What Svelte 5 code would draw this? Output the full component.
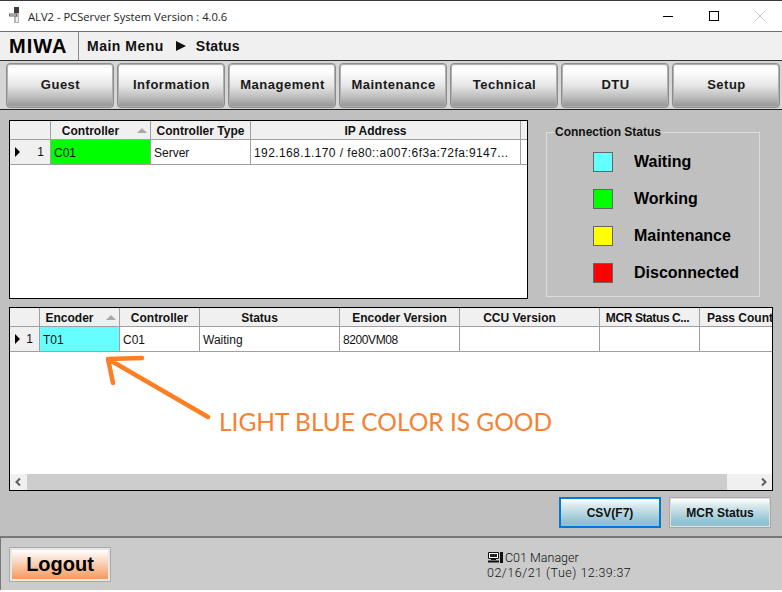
<script>
  const tabs = ["Guest", "Information", "Management", "Maintenance", "Technical", "DTU", "Setup"];
  const legend = [
    { label: "Waiting", color: "#66ffff" },
    { label: "Working", color: "#00ff00" },
    { label: "Maintenance", color: "#ffff00" },
    { label: "Disconnected", color: "#ff0000" }
  ];
</script>

<div class="window">
  <div class="titlebar">
    <svg class="app-icon" width="16" height="20" viewBox="0 0 16 20">
      <rect x="6" y="1" width="5" height="16" fill="#b4b4b4" />
      <rect x="6" y="1" width="5" height="6" fill="#3c3c3c" />
      <rect x="8" y="11" width="2" height="5" fill="#eee" />
      <rect x="1" y="7.500" width="8" height="3" fill="#6a6a6a" />
      <rect x="2" y="8.500" width="6" height="1" fill="#ddd" />
    </svg>
    <span class="title">ALV2 - PCServer System Version : 4.0.6</span>
    <div class="controls">
      <svg width="46" height="30" viewBox="0 0 46 30"><rect x="18" y="15" width="10" height="1" fill="#000" /></svg>
      <svg width="46" height="30" viewBox="0 0 46 30"><rect x="18.5" y="10.5" width="9" height="9" fill="none" stroke="#000" /></svg>
      <svg width="46" height="30" viewBox="0 0 46 30"><path d="M18 10l10 10M28 10l-10 10" stroke="#c4c4c4" fill="none" /></svg>
    </div>
  </div>

  <div class="header">
    <div class="brand">MIWA</div>
    <div class="crumbs">
      <span>Main Menu</span>
      <svg width="12" height="10" viewBox="0 0 12 10"><path d="M1 0l10 5-10 5z" fill="#111" /></svg>
      <span class="leaf">Status</span>
    </div>
  </div>

  <nav class="tabs">
    {#each tabs as tab}
      <button class="tab">{tab}</button>
    {/each}
  </nav>

  <main class="body">
    <div class="top">
      <div class="table controllers">
        <div class="row head">
          <div class="cell"></div>
          <div class="cell sorted">Controller<i class="sort"></i></div>
          <div class="cell">Controller Type</div>
          <div class="cell wide">IP Address</div>
          <div class="cell end"></div>
        </div>
        <div class="row data">
          <div class="cell rowhead"><i class="marker"></i><span>1</span></div>
          <div class="cell green">C01</div>
          <div class="cell">Server</div>
          <div class="cell ip">192.168.1.170 / fe80::a007:6f3a:72fa:9147...</div>
          <div class="cell end"></div>
        </div>
      </div>

      <section class="status">
        <span class="status-title">Connection Status</span>
        {#each legend as item}
          <div class="status-item">
            <i class="swatch" style="background: {item.color}"></i>
            <span>{item.label}</span>
          </div>
        {/each}
      </section>
    </div>

    <div class="table encoders">
      <div class="row head">
        <div class="cell"></div>
        <div class="cell sorted">Encoder<i class="sort"></i></div>
        <div class="cell">Controller</div>
        <div class="cell wide">Status</div>
        <div class="cell">Encoder Version</div>
        <div class="cell wide">CCU Version</div>
        <div class="cell tight">MCR Status C...</div>
        <div class="cell clip">Pass Count</div>
      </div>
      <div class="row data">
        <div class="cell rowhead"><i class="marker"></i><span>1</span></div>
        <div class="cell cyan">T01</div>
        <div class="cell">C01</div>
        <div class="cell">Waiting</div>
        <div class="cell ver">8200VM08</div>
        <div class="cell"></div>
        <div class="cell"></div>
        <div class="cell"></div>
      </div>
      <div class="scrollbar">
        <svg width="17" height="16" viewBox="0 0 17 16"><path d="M10 4.500L6.500 8l3.500 3.500" fill="none" stroke="#606060" stroke-width="2" /></svg>
        <div class="thumb"></div>
        <svg class="right" width="16" height="16" viewBox="0 0 16 16"><path d="M6 4.500L9.500 8 6 11.500" fill="none" stroke="#606060" stroke-width="2" /></svg>
      </div>
    </div>

    <div class="actions">
      <button class="action focused">CSV(F7)</button>
      <button class="action">MCR Status</button>
    </div>

    <!-- annotation drawn over the window -->
    <svg class="arrow" width="120" height="76" viewBox="0 0 120 76">
      <path d="M4 8L104 66M4 8L38 7M4 8L9 32" fill="none" stroke="#fd7f24" stroke-width="4.500" stroke-linecap="round" />
    </svg>
    <div class="note">LIGHT BLUE COLOR IS GOOD</div>
  </main>

  <footer class="footer">
    <button class="logout">Logout</button>
    <div class="session">
      <div class="user">
        <svg width="15" height="11" viewBox="0 0 15 11">
          <path d="M0.500 0.500H10.500V6.500H0.500z" fill="#fff" stroke="#111" />
          <rect x="2" y="2" width="7" height="3" fill="#222" />
          <rect x="3" y="7" width="5" height="1" fill="#111" />
          <rect x="0" y="8.500" width="11" height="2" fill="#111" />
          <rect x="12" y="0" width="3" height="11" fill="#111" />
        </svg>
        <span>C01 Manager</span>
      </div>
      <div class="date">02/16/21 (Tue) 12:39:37</div>
    </div>
  </footer>
</div>

<style>
  :global(body) {
    background: #fff;
  }
  .window {
    width: 782px;
    height: 592px;
    overflow: hidden;
    display: flex;
    flex-direction: column;
    font-family: "Liberation Sans", Arial, sans-serif;
    color: #000;
    box-sizing: border-box;
    border-top: 1px solid #3a3a3a;
    border-bottom: 2px solid #fff;
  }
  .titlebar {
    height: 30px;
    display: flex;
    align-items: center;
    background: #fff;
    border-bottom: 1px solid #707070;
    flex: none;
  }
  .app-icon {
    margin-left: 8px;
  }
  .title {
    margin-left: 4px;
    font-family: "Open Sans", sans-serif;
    font-size: 11.2px;
    color: #222;
  }
  .controls {
    margin-left: auto;
    display: flex;
    margin-right: -1px;
  }
  .header {
    height: 28px;
    flex: none;
    display: flex;
    align-items: center;
    background: #f0f0f0;
    border-bottom: 1px solid #333;
  }
  .brand {
    width: 79px;
    height: 100%;
    border-right: 1px solid #8a8a8a;
    box-sizing: border-box;
    font-size: 20px;
    font-weight: bold;
    letter-spacing: 1px;
    line-height: 28px;
    padding-left: 9px;
  }
  .crumbs {
    display: flex;
    align-items: center;
    gap: 11px;
    padding-left: 8px;
    font-size: 14px;
    font-weight: bold;
    letter-spacing: 0.5px;
    color: #111;
  }
  .leaf {
    margin-left: -2px;
    letter-spacing: 0.2px;
  }
  .tabs {
    flex: none;
    height: 49px;
    box-sizing: border-box;
    padding: 2px 0 0 6px;
    display: flex;
    gap: 3px;
    background: #d6d6d6;
    border-bottom: 1px solid #222;
  }
  .tab {
    width: 108px;
    height: 45px;
    padding: 0 0 2px 1px;
    border: 1px solid #8c8c8c;
    border-radius: 4px;
    box-shadow: inset 0 0 0 1px #b0b0b0;
    background: linear-gradient(#f4f4f4 0%, #ffffff 15%, #e6e6e6 50%, #bcbcbc 78%, #929292 100%);
    font-family: "Liberation Sans", Arial, sans-serif;
    font-size: 13px;
    font-weight: bold;
    letter-spacing: 0.5px;
    color: #1a1a1a;
  }
  .body {
    position: relative;
    flex: 1;
    background: #c0c0c0;
    padding: 10px 0 0 9px;
    min-height: 0;
  }
  .top {
    display: flex;
    align-items: flex-start;
  }
  .table {
    background: #fff;
    border: 1px solid #000;
    box-sizing: border-box;
    font-size: 12px;
    position: relative;
    overflow: hidden;
  }
  .controllers {
    width: 519px;
    height: 179px;
    flex: none;
  }
  .encoders {
    width: 764px;
    height: 184px;
    margin-top: 8px;
  }
  .row {
    display: grid;
    border-bottom: 1px solid #a0a0a0;
    height: 25px;
    box-sizing: border-box;
  }
  .controllers .row {
    grid-template-columns: 41px 100px 100px 270px 7px;
  }
  .encoders .row {
    grid-template-columns: 30px 80px 80px 140px 120px 140px 100px 74px;
  }
  .row.head {
    height: 19px;
    background: #f0f0f0;
    font-weight: bold;
  }
  .cell {
    border-right: 1px solid #a0a0a0;
    display: flex;
    align-items: center;
    justify-content: center;
    position: relative;
    white-space: nowrap;
    overflow: hidden;
    color: #111;
  }
  .head .cell {
    padding-top: 2px;
  }
  .data .cell {
    justify-content: flex-start;
    padding: 1px 0 0 3px;
  }
  .head .sorted {
    padding-right: 20px;
  }
  .head .wide {
    padding-right: 20px;
  }
  .head .tight {
    letter-spacing: -0.4px;
    padding-right: 4px;
  }
  .ip {
    letter-spacing: 0.4px;
  }
  .ver {
    letter-spacing: -0.4px;
  }
  .data .rowhead {
    background: #f0f0f0;
    padding: 0;
    justify-content: space-between;
  }
  .rowhead span {
    padding-right: 6px;
    color: #111;
  }
  .marker {
    width: 0;
    height: 0;
    margin-left: 5px;
    border-left: 5px solid #000;
    border-top: 5px solid transparent;
    border-bottom: 5px solid transparent;
  }
  .sort {
    position: absolute;
    right: 3px;
    top: 7px;
    width: 0;
    height: 0;
    border-left: 5px solid transparent;
    border-right: 5px solid transparent;
    border-bottom: 5px solid #a8a8a8;
  }
  .clip {
    justify-content: flex-start !important;
    padding-left: 7px;
    border-right: none;
  }
  .green {
    background: #00ff00;
  }
  .cyan {
    background: #66ffff;
  }
  .scrollbar {
    position: absolute;
    left: 0;
    right: 0;
    bottom: 0;
    height: 16px;
    display: flex;
    background: #f0f0f0;
  }
  .thumb {
    width: 700px;
    background: #cdcdcd;
  }
  .scrollbar .right {
    margin-left: auto;
  }
  .status {
    position: relative;
    margin: 12px 0 0 18px;
    width: 214px;
    height: 165px;
    box-sizing: border-box;
    border: 1px solid #dcdcdc;
    padding: 19px 0 0 46px;
    display: flex;
    flex-direction: column;
    gap: 17px;
  }
  .status-title {
    position: absolute;
    left: 7px;
    top: -8px;
    padding: 0 1px;
    background: #c0c0c0;
    font-size: 12px;
    font-weight: bold;
    color: #111;
  }
  .status-item {
    display: flex;
    align-items: center;
    height: 20px;
    gap: 21px;
    font-size: 16px;
    font-weight: bold;
  }
  .swatch {
    width: 20px;
    height: 20px;
    box-sizing: border-box;
    border: 1px solid #666;
  }
  .actions {
    display: flex;
    justify-content: flex-end;
    gap: 8px;
    padding: 6px 11px 0 0;
  }
  .action {
    width: 102px;
    height: 31px;
    padding: 0;
    box-sizing: border-box;
    border: 2px solid #e0e0e0;
    outline: 1px solid #a8a8a8;
    outline-offset: -1px;
    background: linear-gradient(#ffffff 0%, #d8e8ec 25%, #8fc3d4 85%, #8fc3d4 100%);
    font-family: "Liberation Sans", Arial, sans-serif;
    font-size: 12px;
    font-weight: bold;
    color: #111;
  }
  .action.focused {
    outline: 2px solid #0078d7;
    outline-offset: -2px;
  }
  .arrow {
    position: absolute;
    left: 104px;
    top: 241px;
  }
  .note {
    position: absolute;
    left: 219px;
    top: 297px;
    font-family: Lato, sans-serif;
    font-size: 24.500px;
    color: #f58233;
    white-space: nowrap;
  }
  .footer {
    flex: none;
    height: 54px;
    box-sizing: border-box;
    background: #cbcbcb;
    border-top: 2px solid #777;
    border-left: 1px solid #777;
    display: flex;
    position: relative;
  }
  .logout {
    margin: 9px 0 0 8px;
    width: 102px;
    height: 35px;
    padding: 0;
    box-sizing: border-box;
    border: 3px solid #e6e6e6;
    outline: 1px solid #aaa;
    outline-offset: -1px;
    background: linear-gradient(#fff 0%, #fbe6d8 25%, #f59a5c 100%);
    font-family: "Liberation Sans", Arial, sans-serif;
    font-size: 20px;
    font-weight: bold;
    color: #000;
  }
  .session {
    position: absolute;
    left: 486px;
    top: 12px;
    font-family: Roboto, sans-serif;
    font-weight: 300;
    font-size: 12.500px;
    line-height: 15px;
    color: #111;
    white-space: nowrap;
  }
  .date {
    letter-spacing: 0.5px;
  }
  .user {
    display: flex;
    align-items: center;
    gap: 2px;
    padding-left: 1px;
  }
</style>
